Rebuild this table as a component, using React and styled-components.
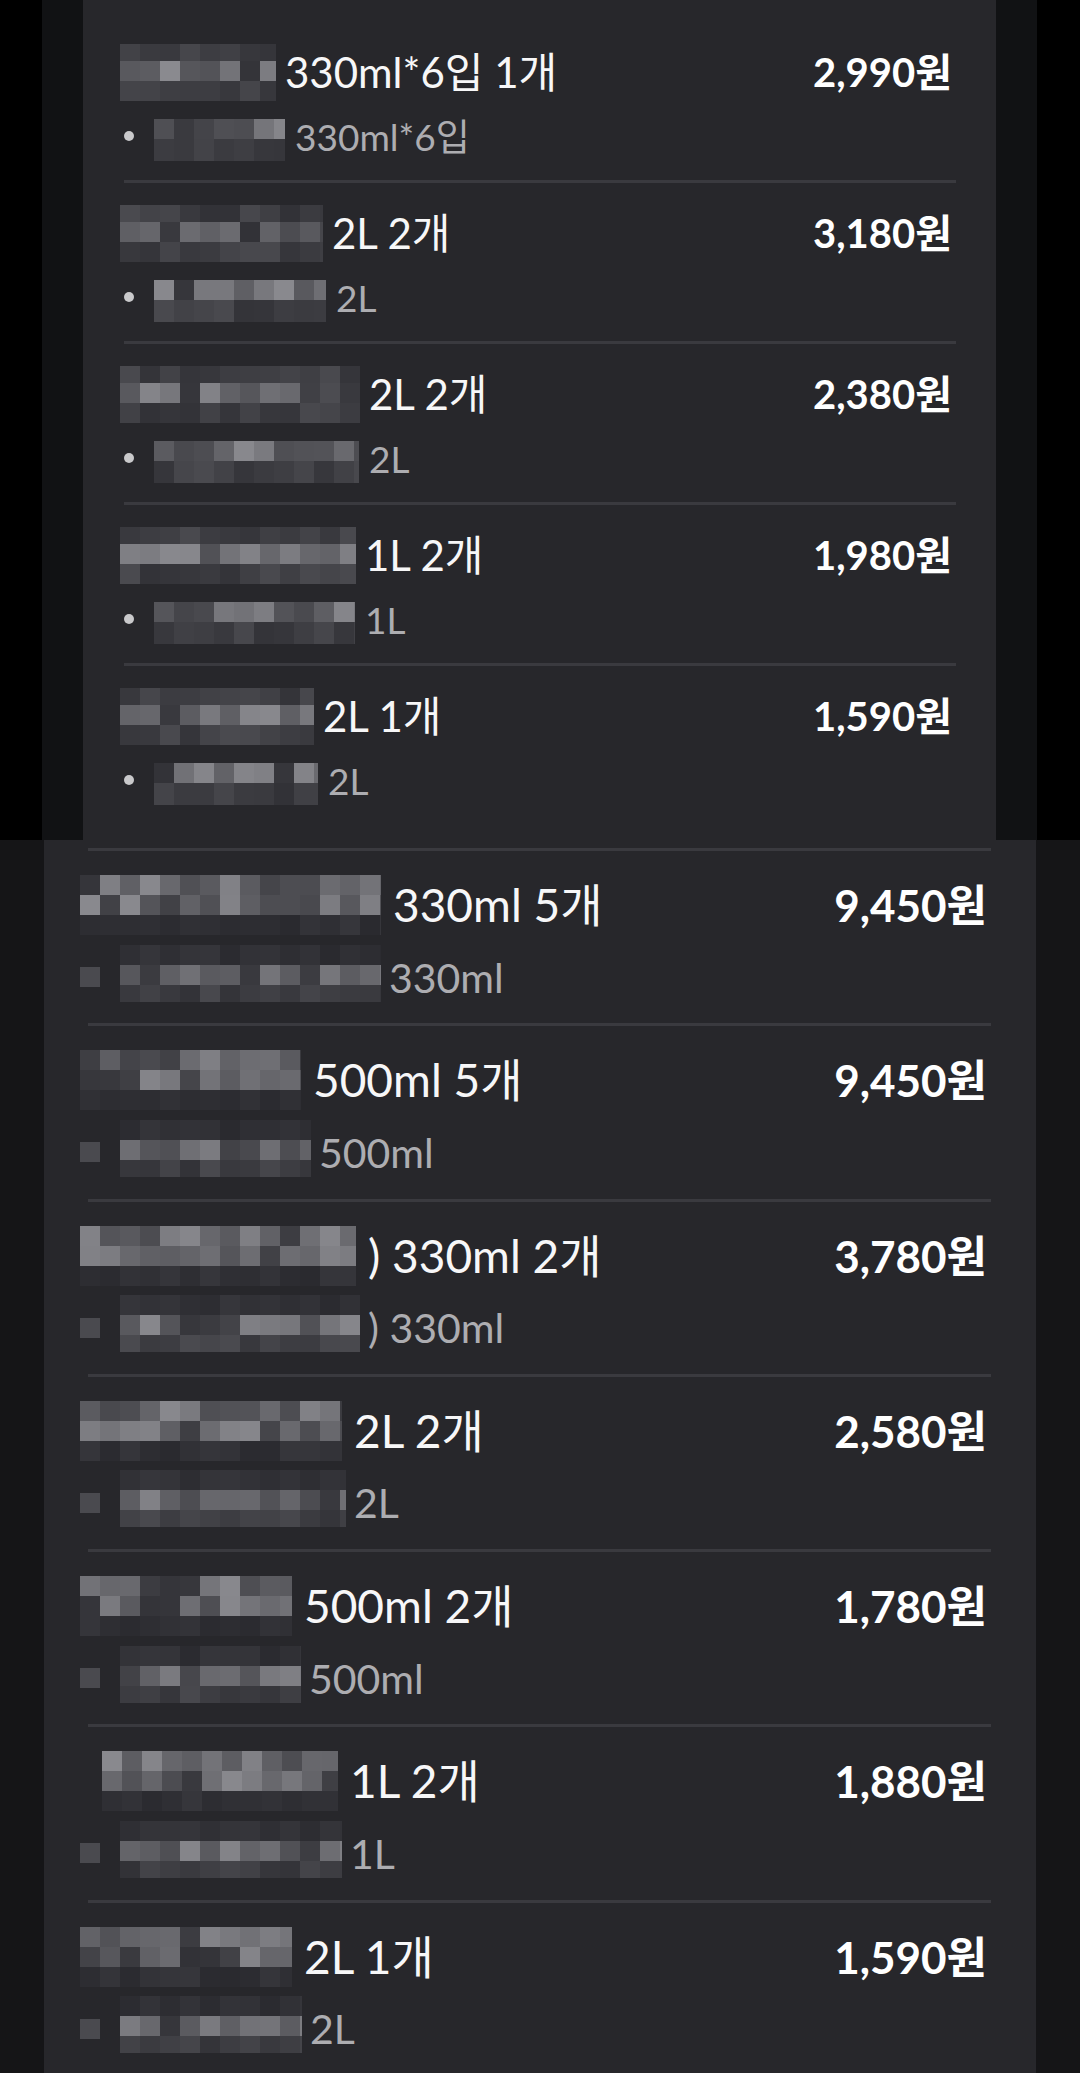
import React from 'react'
import styled, { createGlobalStyle } from 'styled-components'

const GlobalStyle = createGlobalStyle`
  html, body {
    margin: 0;
    padding: 0;
    background: #151517;
  }
  body {
    font-family: Lato, "Noto Sans CJK KR", sans-serif;
    -webkit-font-smoothing: antialiased;
  }
`

const Page = styled.main`
  width: 1080px;
  height: 2073px;
  overflow: hidden;
  display: flex;
  flex-direction: column;
`
const TopShot = styled.section`
  height: 840px;
  flex-shrink: 0;
  display: flex;
  background: #000;
  padding: 0 43px 0 42px;
`
const Band = styled.div`
  flex: 1;
  display: flex;
  padding: 0 41px;
  background: #111214;
`
const BottomShot = styled.section`
  flex: 1;
  display: flex;
  background: #151517;
  padding: 0 44px;
`
const Panel = styled.div`
  flex: 1;
  display: flex;
  flex-direction: column;
  background: #27272b;
  padding-top: ${p => (p.$big ? 8 : 22)}px;
`
const Row = styled.div`
  flex-shrink: 0;
  display: flex;
  flex-direction: column;
  padding: ${p => (p.$big ? '26px 49px 20.3px 36px' : '24px 44px 20px 37px')};
`
const Divider = styled.hr`
  flex-shrink: 0;
  height: 3px;
  border: none;
  background: #3a3a3f;
  margin: ${p => (p.$big ? '0 45px 0 44px' : '0 40px 0 41px')};
`
const TitleLine = styled.div`
  height: ${p => (p.$big ? 56 : 52)}px;
  display: flex;
  align-items: center;
  justify-content: space-between;
`
const Name = styled.div`
  display: flex;
  align-items: center;
`
const Title = styled.span`
  font-size: ${p => (p.$big ? 46 : 42)}px;
  line-height: 1;
  color: #f7f7f8;
  white-space: nowrap;
  margin-left: ${p => p.$gap}px;
`
const Price = styled.span`
  font-size: ${p => (p.$big ? 44 : 40)}px;
  font-weight: 700;
  line-height: 1;
  color: #fff;
  white-space: nowrap;
`
const SubLine = styled.div`
  height: ${p => (p.$big ? 52 : 48)}px;
  margin-top: ${p => (p.$big ? 18 : 14)}px;
  display: flex;
  align-items: center;
`
const Bullet = styled.span`
  flex-shrink: 0;
  width: 10px;
  height: 10px;
  border-radius: 50%;
  background: #c9c9cb;
  margin: 0 20px 0 4px;
`
const BlurDot = styled.span`
  flex-shrink: 0;
  width: 20px;
  height: 20px;
  background: #4a4a4f;
  margin: 0 20px 0 0;
`
const Sub = styled.span`
  font-size: ${p => (p.$big ? 41 : 37)}px;
  line-height: 1;
  color: #adadb1;
  white-space: nowrap;
  margin-left: ${p => p.$gap}px;
`
const Pixels = styled.div`
  flex-shrink: 0;
  display: grid;
  grid-template-columns: repeat(${p => p.$cols}, 20px);
  width: ${p => p.$w}px;
  margin-left: ${p => p.$lead || 0}px;
  margin-top: ${p => p.$shift || 0}px;
  overflow: hidden;
`

const tones = {
  bright: [76, 62],
  dim: [50, 24],
  faint: [42, 12],
}

function rng(seed) {
  let s = seed * 9301 + 49297
  return () => {
    s = (s * 16807) % 2147483647
    return (s % 10000) / 10000
  }
}

function Mosaic({ seed, w, rows, lead, shift }) {
  const cols = Math.ceil(w / 20)
  const rand = rng(seed)
  const cells = []
  rows.forEach(([h, tone], r) => {
    for (let c = 0; c < cols; c++) {
      let [base, span] = tones[tone]
      if (tone === 'bright' && rand() < 0.15) [base, span] = tones.dim
      const v = Math.round(base + rand() * span)
      cells.push(
        <div key={r + '-' + c} style={{ height: h, background: `rgb(${v},${v},${v + 5})` }} />
      )
    }
  })
  return (
    <Pixels $cols={cols} $w={w} $lead={lead} $shift={shift}>
      {cells}
    </Pixels>
  )
}

const topRows = [
  { title: '330ml*6입 1개', tx: 285, sub: '330ml*6입', sx: 295, price: '2,990원' },
  { title: '2L 2개', tx: 332, sub: '2L', sx: 336, price: '3,180원' },
  { title: '2L 2개', tx: 369, sub: '2L', sx: 369, price: '2,380원' },
  { title: '1L 2개', tx: 365, sub: '1L', sx: 365, price: '1,980원' },
  { title: '2L 1개', tx: 323, sub: '2L', sx: 328, price: '1,590원' },
]

const bottomRows = [
  { title: '330ml 5개', tx: 393, sub: '330ml', sx: 389, price: '9,450원' },
  { title: '500ml 5개', tx: 313, sub: '500ml', sx: 319, price: '9,450원' },
  { title: ') 330ml 2개', tx: 368, sub: ') 330ml', sx: 368, price: '3,780원' },
  { title: '2L 2개', tx: 354, sub: '2L', sx: 354, price: '2,580원' },
  { title: '500ml 2개', tx: 304, sub: '500ml', sx: 309, price: '1,780원' },
  { title: '1L 2개', tx: 350, sub: '1L', sx: 350, price: '1,880원', lead: 22 },
  { title: '2L 1개', tx: 304, sub: '2L', sx: 310, price: '1,590원' },
]

function Item({ item, big, index }) {
  const x0 = big ? 80 : 120
  const lead = item.lead || 0
  const titleGap = big ? 12 : 9
  const subStart = big ? 120 : 154
  const subGap = big ? 8 : 10
  const titleRows = big
    ? [[20, 'bright'], [20, 'bright'], [20, 'faint']]
    : [[17, 'dim'], [20, 'bright'], [20, 'dim']]
  const subRows = big
    ? [[20, 'faint'], [20, 'bright'], [17, 'dim']]
    : [[20, 'bright'], [22, 'dim']]
  return (
    <Row $big={big}>
      <TitleLine $big={big}>
        <Name>
          <Mosaic
            seed={index * 7 + (big ? 3 : 1)}
            w={item.tx - titleGap - x0 - lead}
            lead={lead}
            rows={titleRows}
          />
          <Title $big={big} $gap={titleGap}>{item.title}</Title>
        </Name>
        <Price $big={big}>{item.price}</Price>
      </TitleLine>
      <SubLine $big={big}>
        {big ? <BlurDot /> : <Bullet />}
        <Mosaic
          seed={index * 11 + (big ? 5 : 2)}
          w={item.sx - subGap - subStart}
          rows={subRows}
          shift={big ? -8 : 8}
        />
        <Sub $big={big} $gap={subGap}>{item.sub}</Sub>
      </SubLine>
    </Row>
  )
}

export default function App() {
  return (
    <Page>
      <GlobalStyle />
      <TopShot>
        <Band>
          <Panel>
            {topRows.map((item, i) => (
              <React.Fragment key={i}>
                {i > 0 && <Divider />}
                <Item item={item} index={i} />
              </React.Fragment>
            ))}
          </Panel>
        </Band>
      </TopShot>
      <BottomShot>
        <Panel $big>
          {bottomRows.map((item, i) => (
            <React.Fragment key={i}>
              <Divider $big />
              <Item item={item} index={i} big />
            </React.Fragment>
          ))}
        </Panel>
      </BottomShot>
    </Page>
  )
}
